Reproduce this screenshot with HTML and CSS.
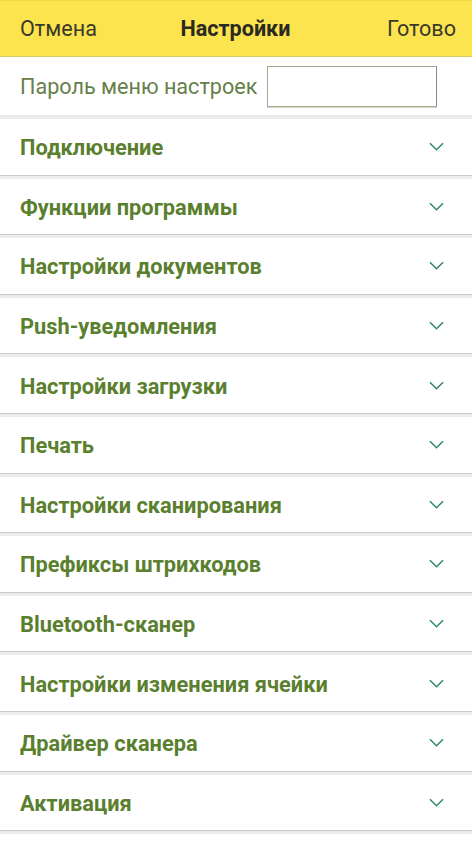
FILE: index.html
```html
<!DOCTYPE html>
<html lang="ru">
<head>
<meta charset="utf-8">
<title>Настройки</title>
<link rel="stylesheet" href="styles.css">
</head>
<body>
<header class="topbar">
  <span class="tb-btn tb-left">Отмена</span>
  <span class="tb-title">Настройки</span>
  <span class="tb-btn tb-right">Готово</span>
</header>
<div class="pwd-row">
  <span class="pwd-label">Пароль меню настроек</span>
  <span class="pwd-input"></span>
</div>
<div class="list">
  <div class="item"><span class="item-title">Подключение</span><svg class="chev" viewBox="0 0 16 9"><path d="M1 1 L8 8 L15 1"/></svg></div>
  <div class="item"><span class="item-title">Функции программы</span><svg class="chev" viewBox="0 0 16 9"><path d="M1 1 L8 8 L15 1"/></svg></div>
  <div class="item"><span class="item-title">Настройки документов</span><svg class="chev" viewBox="0 0 16 9"><path d="M1 1 L8 8 L15 1"/></svg></div>
  <div class="item"><span class="item-title">Push-уведомления</span><svg class="chev" viewBox="0 0 16 9"><path d="M1 1 L8 8 L15 1"/></svg></div>
  <div class="item"><span class="item-title">Настройки загрузки</span><svg class="chev" viewBox="0 0 16 9"><path d="M1 1 L8 8 L15 1"/></svg></div>
  <div class="item"><span class="item-title">Печать</span><svg class="chev" viewBox="0 0 16 9"><path d="M1 1 L8 8 L15 1"/></svg></div>
  <div class="item"><span class="item-title">Настройки сканирования</span><svg class="chev" viewBox="0 0 16 9"><path d="M1 1 L8 8 L15 1"/></svg></div>
  <div class="item"><span class="item-title">Префиксы штрихкодов</span><svg class="chev" viewBox="0 0 16 9"><path d="M1 1 L8 8 L15 1"/></svg></div>
  <div class="item"><span class="item-title">Bluetooth-сканер</span><svg class="chev" viewBox="0 0 16 9"><path d="M1 1 L8 8 L15 1"/></svg></div>
  <div class="item"><span class="item-title">Настройки изменения ячейки</span><svg class="chev" viewBox="0 0 16 9"><path d="M1 1 L8 8 L15 1"/></svg></div>
  <div class="item"><span class="item-title">Драйвер сканера</span><svg class="chev" viewBox="0 0 16 9"><path d="M1 1 L8 8 L15 1"/></svg></div>
  <div class="item"><span class="item-title">Активация</span><svg class="chev" viewBox="0 0 16 9"><path d="M1 1 L8 8 L15 1"/></svg></div>
</div>
</body>
</html>
```

FILE: styles.css
```css
html, body {
  margin: 0;
  padding: 0;
  background: #ffffff;
  font-family: Roboto, "Noto Sans", sans-serif;
}

.topbar {
  height: 55px;
  background: #fce44f;
  border-top: 1px solid #eed54a;
  border-bottom: 1px solid #d8c86a;
  display: grid;
  grid-template-columns: 1fr auto 1fr;
  align-items: center;
  padding: 0 16px 0 20px;
}

.tb-btn {
  font-size: 21.6px;
  color: #3a3a2a;
}

.tb-left { justify-self: start; }
.tb-right { justify-self: end; }

.tb-title {
  font-size: 21.6px;
  font-weight: 700;
  color: #2a2a22;
  margin-left: -5px;
}

.pwd-row {
  height: 58px;
  display: flex;
  align-items: center;
  padding-left: 20px;
  gap: 10px;
}

.pwd-label {
  font-size: 21.6px;
  color: #66804a;
}

.pwd-input {
  width: 168px;
  height: 39px;
  border: 1px solid #a4a88c;
  border-right-color: #8c8c80;
  box-shadow: 0 1px 0 #d8d8d0;
  background: #fff;
}

.list {
  display: flex;
  flex-direction: column;
}

.item {
  height: 55.6px;
  box-sizing: content-box;
  border-top: 1px solid #c9c9c9;
  box-shadow: inset 0 3px 0 #ececec;
  padding-top: 3px;
  display: flex;
  align-items: center;
  justify-content: space-between;
  padding-left: 20px;
  padding-right: 28px;
}

.list .item:first-child {
  border-top-color: #e6e6e6;
}

.list::after {
  content: "";
  display: block;
  height: 3px;
  border-top: 1px solid #c9c9c9;
  background: #ececec;
}

.item-title {
  position: relative;
  top: 1px;
  font-size: 21.8px;
  font-weight: 700;
  color: #5a7f2e;
}

.chev {
  width: 15px;
  height: 9px;
  fill: none;
  stroke: #2f8a66;
  stroke-width: 1.6;
}
```
